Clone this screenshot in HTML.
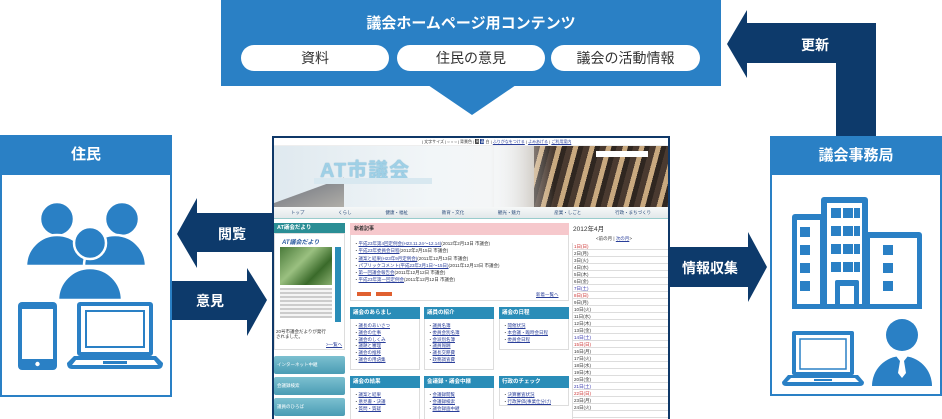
<!DOCTYPE html>
<html><head><meta charset="utf-8"><style>
*{margin:0;padding:0;box-sizing:border-box}
body{width:942px;height:419px;background:#fff;position:relative;overflow:hidden;font-family:"Liberation Sans","Noto Sans CJK JP",sans-serif}
.a{position:absolute}
.w{color:#fff;font-weight:bold;text-align:center}
.pill{position:absolute;top:45px;height:26px;background:#fff;border-radius:13px;color:#333;font-size:14px;line-height:26px;text-align:center}
.t{font-size:4.5px;line-height:7.3px;white-space:nowrap;color:#333}
.lk{color:#2a3f9a;text-decoration:underline}
.sh{position:absolute;height:12px;background:#2a8db8;color:#fff;font-size:5.5px;font-weight:bold;line-height:12px;padding-left:3px}
.sb{position:absolute;background:#fff;border:1px solid #ddd}
</style></head><body>
<div class="a" style="left:221px;top:0;width:500px;height:86px;background:#2a80c5"></div>
<svg class="a" style="left:0;top:0" width="942" height="419">
<polygon points="428,85 516,85 472,115" fill="#2a80c5"/>
<polygon points="727,44 747,10 747,23 876,23 876,136 836,136 836,63 747,63 747,78" fill="#0d3a6b"/>
<polygon points="177,234 197,198 197,213 272,213 272,252 197,252 197,268" fill="#0d3a6b"/>
<polygon points="172,281 247,281 247,268 267,300 247,336 247,320 172,320" fill="#0d3a6b"/>
<polygon points="670,247 748,247 748,232 767,267 748,302 748,287 670,287" fill="#0d3a6b"/>
</svg>
<div class="a w" style="left:221px;top:12px;width:500px;font-size:15px">議会ホームページ用コンテンツ</div>
<div class="pill" style="left:241px;width:148px">資料</div>
<div class="pill" style="left:397px;width:148px">住民の意見</div>
<div class="pill" style="left:551px;width:149px">議会の活動情報</div>
<div class="a w" style="left:790px;top:35px;width:50px;font-size:14px">更新</div>
<div class="a w" style="left:200px;top:224px;width:64px;font-size:14px">閲覧</div>
<div class="a w" style="left:178px;top:291px;width:64px;font-size:14px">意見</div>
<div class="a w" style="left:670px;top:258px;width:80px;font-size:14px">情報収集</div>

<div class="a" style="left:0;top:135px;width:172px;height:262px;border:2px solid #2a80c5;border-top:none"></div>
<div class="a w" style="left:0;top:135px;width:172px;height:40px;background:#2a80c5;font-size:15px;line-height:40px">住民</div>
<svg class="a" style="left:0;top:175px" width="172" height="222">
<g fill="#2a80c5" stroke="#fff" stroke-width="2.5">
<circle cx="57" cy="44" r="17"/><circle cx="122" cy="44" r="17"/>
<path d="M26 91 A31 31 0 0 1 88 91 Z"/><path d="M84 91 A31 31 0 0 1 146 91 Z"/>
<circle cx="90" cy="68" r="16"/>
<path d="M58 125 A32 32 0 0 1 122 125 Z"/>
</g>
<g fill="#2a80c5">
<rect x="18" y="127" width="39" height="68" rx="4"/>
<rect x="77" y="127" width="76" height="54" rx="3"/>
<path d="M67 188 L74 181 L156 181 L163 188 Q163 194 158 194 L72 194 Q67 194 67 188 Z"/>
</g>
<rect x="22" y="134" width="31" height="50" fill="#fff"/>
<circle cx="37.5" cy="189" r="2.2" fill="#fff"/>
<rect x="81" y="131" width="68" height="46" fill="#fff"/>
<rect x="86" y="136" width="58" height="36" fill="none" stroke="#2a80c5" stroke-width="2"/>
<path d="M72 190 L76 185 L154 185 L158 190 Z" fill="#fff"/>
<rect x="103" y="186" width="24" height="3" fill="#2a80c5"/>
</svg>

<div class="a" style="left:770px;top:136px;width:172px;height:260px;border:2px solid #2a80c5;border-top:none"></div>
<div class="a w" style="left:770px;top:136px;width:172px;height:39px;background:#2a80c5;font-size:15px;line-height:39px">議会事務局</div>
<svg class="a" style="left:770px;top:175px" width="172" height="221">
<g fill="#2a80c5">
<rect x="51" y="22" width="47" height="112" rx="3"/>
<rect x="22" y="39" width="33" height="95" rx="3"/>
<rect x="94" y="57" width="58" height="77" rx="3"/>
</g>
<g fill="#fff">
<rect x="57" y="28" width="35" height="106"/>
<rect x="27" y="45" width="23" height="84"/>
<rect x="100" y="63" width="47" height="66"/>
</g>
<g fill="#2a80c5">
<rect x="61" y="33" width="10" height="10"/><rect x="73" y="33" width="10" height="10"/><rect x="84" y="33" width="6" height="10"/>
<rect x="61" y="51" width="10" height="10"/><rect x="73" y="51" width="10" height="10"/><rect x="84" y="51" width="6" height="10"/>
<rect x="61" y="69" width="10" height="10"/><rect x="73" y="69" width="10" height="10"/><rect x="84" y="69" width="6" height="10"/>
<rect x="61" y="87" width="10" height="10"/><rect x="73" y="87" width="10" height="10"/><rect x="84" y="87" width="6" height="10"/>
<rect x="30" y="52" width="10" height="10"/><rect x="30" y="70" width="10" height="10"/><rect x="30" y="88" width="10" height="10"/><rect x="30" y="106" width="10" height="10"/>
<rect x="113" y="70" width="10" height="10"/><rect x="113" y="88" width="10" height="10"/><rect x="113" y="106" width="10" height="10"/>
<rect x="65" y="105" width="24" height="29" rx="2"/>
</g>
<rect x="70" y="111" width="14" height="23" fill="#fff"/>
<rect x="22" y="129" width="130" height="5" fill="#2a80c5"/>
<g fill="#2a80c5">
<rect x="22" y="156" width="62" height="44" rx="2"/>
<path d="M12 207 L18 200 L88 200 L94 207 Q94 211 90 211 L16 211 Q12 211 12 207 Z"/>
</g>
<rect x="26" y="160" width="54" height="37" fill="#fff"/>
<rect x="30" y="164" width="46" height="30" fill="none" stroke="#2a80c5" stroke-width="1.5"/>
<path d="M17 207 L21 203 L85 203 L89 207 Z" fill="#fff"/>
<rect x="44" y="204" width="18" height="2" fill="#2a80c5"/>
<circle cx="132" cy="160" r="16" fill="#2a80c5"/>
<path d="M102 211 A30 30 0 0 1 162 211 Z" fill="#2a80c5"/>
<path d="M126 181 L138 181 L134 186 L136 198 L132 203 L128 198 L130 186 Z" fill="#fff"/>
</svg>

<div class="a" style="left:272px;top:136px;width:398px;height:283px;background:#0f3868"></div>
<div class="a" style="left:274px;top:138px;width:394px;height:281px;background:#fff;overflow:hidden">
 <div class="a" style="left:0;top:0;width:394px;height:8px;background:#fff;border-bottom:1px solid #eee"></div>
 <div class="a t" style="left:148px;top:0;font-size:4px">| 文字サイズ | ○ ○ ○ | 背景色 | <span style="background:#222;color:#fff">黒</span> <span style="background:#1a3a8a;color:#fff">青</span> 白 | <span class="lk">ふりがなをつける</span> | <span class="lk">よみあげる</span> | <span class="lk">ご利用案内</span></div>
 <div class="a" style="left:0;top:8px;width:394px;height:61px;background:linear-gradient(90deg,#dfe9ef 0%,#f2f6f8 40%,#f4f6f7 55%,#9b8b7a 75%,#5a4a3e 100%)"></div>
 <div class="a" style="left:0;top:35px;width:70px;height:34px;background:linear-gradient(160deg,transparent 50%,#8a8c90 51%,#b0aea8 100%)"></div>
 <div class="a" style="left:260px;top:8px;width:134px;height:61px;background:repeating-linear-gradient(105deg,#4a3a30 0 6px,#c9a97f 6px 11px,#2f2620 11px 16px)"></div>
 <div class="a" style="left:220px;top:8px;width:60px;height:61px;background:linear-gradient(90deg,#f4f6f7,rgba(244,246,247,0))"></div>
 <div class="a" style="left:322px;top:13px;width:52px;height:6px;background:#fff"></div>
 <div class="a" style="left:46px;top:16px;font-size:20px;font-weight:bold;color:#9fd0e6;letter-spacing:1px;text-shadow:0 0 1px #5a9ec0">AT市議会</div>
 <div class="a" style="left:40px;top:40px;width:118px;height:6px;background:#d8e8f0"></div>
 <div class="a" style="left:0;top:69px;width:394px;height:12px;background:linear-gradient(#f6f8f8,#e2e8ea);border-bottom:1px solid #9cc"></div>
 <div class="a t" style="left:0;top:71px;width:394px;display:flex;justify-content:space-around;color:#2a4a7a;font-size:4.5px"><span>トップ</span><span>くらし</span><span>健康・福祉</span><span>教育・文化</span><span>観光・魅力</span><span>産業・しごと</span><span>行政・まちづくり</span></div>
 <div class="a" style="left:0;top:85px;width:71px;height:10px;background:#2a8e95;color:#fff;font-size:5.5px;font-weight:bold;line-height:10px;padding-left:3px">AT議会だより</div>
 <div class="a" style="left:0;top:95px;width:71px;height:117px;border:1px solid #ddd"></div>
 <div class="a" style="left:8px;top:99px;font-size:6px;font-weight:bold;font-style:italic;color:#2a5aa0">AT議会だより</div>
 <div class="a" style="left:6px;top:109px;width:52px;height:38px;background:linear-gradient(135deg,#4a7a3a,#9ac080 40%,#3a6a2a 70%,#8ab070)"></div>
 <div class="a" style="left:6px;top:150px;width:52px;height:30px;background:repeating-linear-gradient(0deg,#ccc 0 2px,#f4f4f4 2px 4px)"></div>
 <div class="a" style="left:61px;top:109px;width:6px;height:75px;background:#2a8db8"></div>
 <div class="a t" style="left:2px;top:191px;font-size:4.5px;line-height:5px">20号市議会だよりが発行<br>されました。</div>
 <div class="a t lk" style="left:52px;top:203px">>一覧へ</div>
 <div class="a" style="left:0;top:218px;width:71px;height:18px;background:linear-gradient(#7cc0d0,#4a9cb4);border-radius:2px;color:#fff;font-size:4.5px;line-height:18px;padding-left:3px">インターネット中継</div>
 <div class="a" style="left:0;top:239px;width:71px;height:18px;background:linear-gradient(#7cc0d0,#4a9cb4);border-radius:2px;color:#fff;font-size:4.5px;line-height:18px;padding-left:3px">会議録検索</div>
 <div class="a" style="left:0;top:260px;width:71px;height:18px;background:linear-gradient(#7cc0d0,#4a9cb4);border-radius:2px;color:#fff;font-size:4.5px;line-height:18px;padding-left:3px">議員のひろば</div>
 <div class="a" style="left:76px;top:85px;width:219px;height:78px;border:1px solid #ddd"></div>
 <div class="a" style="left:76px;top:85px;width:219px;height:12px;background:#f6c8cc;font-size:5px;font-weight:bold;line-height:12px;padding-left:4px;color:#333">新着記事</div>
 <div class="a t" style="left:80px;top:102px">
 ・<span class="lk">平成23年第4回定例会(H23.11.24〜12.14)</span>(2012年2月13日 市議会)<br>
 ・<span class="lk">平成23年委員会日程</span>(2012年2月15日 市議会)<br>
 ・<span class="lk">議案と結果(H23年9月定例会)</span>(2011年12月13日 市議会)<br>
 ・<span class="lk">パブリックコメント(平成23年2月1日〜15日)</span>(2011年12月13日 市議会)<br>
 ・<span class="lk">第一回議会報告会</span>(2011年12月12日 市議会)<br>
 ・<span class="lk">平成23年第一回定例会</span>(2011年12月12日 市議会)</div>
 <div class="a" style="left:83px;top:154px;width:14px;height:4px;background:#e06030"></div>
 <div class="a" style="left:102px;top:154px;width:16px;height:4px;background:#e06030"></div>
 <div class="a t lk" style="left:262px;top:153px">新着一覧へ</div>
 <div class="sb" style="left:76px;top:169px;width:70px;height:63px"></div><div class="sh" style="left:76px;top:169px;width:70px">議会のあらまし</div>
 <div class="sb" style="left:150px;top:169px;width:70px;height:63px"></div><div class="sh" style="left:150px;top:169px;width:70px">議員の紹介</div>
 <div class="sb" style="left:225px;top:169px;width:70px;height:43px"></div><div class="sh" style="left:225px;top:169px;width:70px">議会の日程</div>
 <div class="a t" style="left:80px;top:185px;line-height:6.8px">・<span class="lk">議長のあいさつ</span><br>・<span class="lk">議会の仕事</span><br>・<span class="lk">議会のしくみ</span><br>・<span class="lk">議題と審理</span><br>・<span class="lk">議会の推移</span><br>・<span class="lk">議会の用語集</span></div>
 <div class="a t" style="left:154px;top:185px;line-height:6.8px">・<span class="lk">議員名簿</span><br>・<span class="lk">委員会別名簿</span><br>・<span class="lk">会派別名簿</span><br>・<span class="lk">議員報酬</span><br>・<span class="lk">議長交際費</span><br>・<span class="lk">政務調査費</span></div>
 <div class="a t" style="left:229px;top:185px;line-height:6.8px">・<span class="lk">開催状況</span><br>・<span class="lk">本会議・臨時会日程</span><br>・<span class="lk">委員会日程</span></div>
 <div class="sb" style="left:76px;top:238px;width:70px;height:50px"></div><div class="sh" style="left:76px;top:238px;width:70px">議会の結果</div>
 <div class="sb" style="left:150px;top:238px;width:70px;height:50px"></div><div class="sh" style="left:150px;top:238px;width:70px">会議録・議会中継</div>
 <div class="sb" style="left:225px;top:238px;width:70px;height:30px"></div><div class="sh" style="left:225px;top:238px;width:70px">行政のチェック</div>
 <div class="a t" style="left:80px;top:254px;line-height:6.8px">・<span class="lk">議案と結果</span><br>・<span class="lk">意見書・決議</span><br>・<span class="lk">質問・質疑</span></div>
 <div class="a t" style="left:154px;top:254px;line-height:6.8px">・<span class="lk">会議録閲覧</span><br>・<span class="lk">会議録検索</span><br>・<span class="lk">議会録画中継</span></div>
 <div class="a t" style="left:229px;top:254px;line-height:6.8px">・<span class="lk">決算審査状況</span><br>・<span class="lk">行政評価(事業仕分け)</span></div>
 <div class="a" style="left:299px;top:85px;font-size:6.5px;color:#333">2012年4月</div>
 <div class="a t" style="left:322px;top:97px">&lt;前の月 | <span class="lk">次の月</span>&gt;</div>
 <div class="a" style="left:298px;top:105px;width:96px;height:180px;background:repeating-linear-gradient(#fff 0 6px,#ddd 6px 7px);border-left:1px solid #ddd"></div>
 <div class="a t" style="left:300px;top:105px;line-height:7px;font-size:4.5px">
 <span style="color:#c33">1日(日)</span><br>2日(月)<br>3日(火)<br>4日(水)<br>5日(木)<br>6日(金)<br><span style="color:#33a">7日(土)</span><br><span style="color:#c33">8日(日)</span><br>9日(月)<br>10日(火)<br>11日(水)<br>12日(木)<br>13日(金)<br><span style="color:#33a">14日(土)</span><br><span style="color:#c33">15日(日)</span><br>16日(月)<br>17日(火)<br>18日(水)<br>19日(木)<br>20日(金)<br><span style="color:#33a">21日(土)</span><br><span style="color:#c33">22日(日)</span><br>23日(月)<br>24日(火)</div>
</div>
</body></html>
